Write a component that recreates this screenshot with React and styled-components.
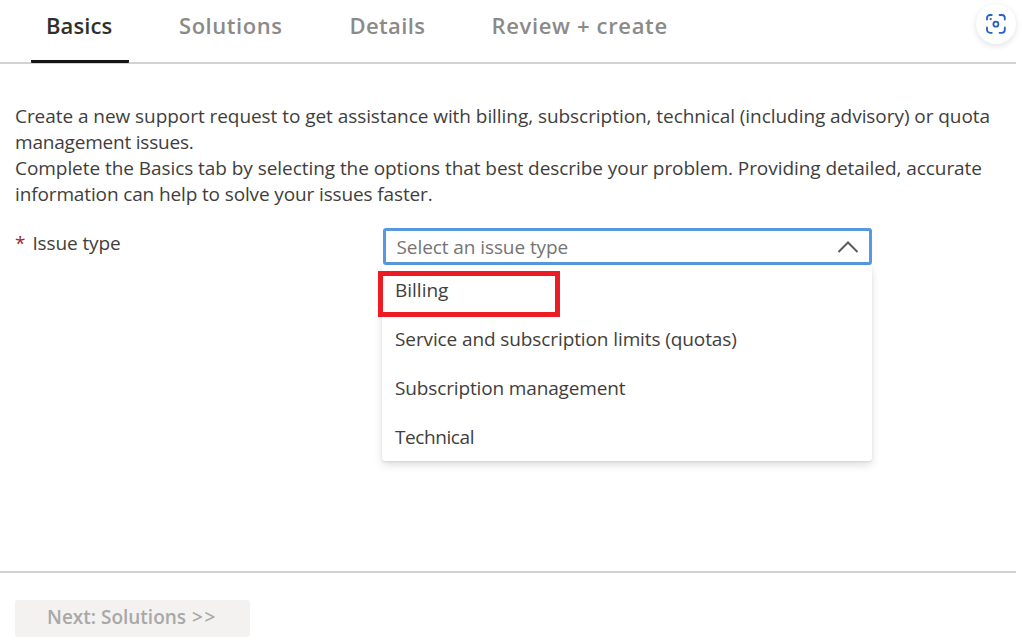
import React from "react";
import styled, { createGlobalStyle } from "styled-components";

const GlobalStyle = createGlobalStyle`
  *, *::before, *::after { box-sizing: border-box; }
  body {
    margin: 0;
    background: #fff;
    color: #3f3e3d;
    font: 400 19px/26px "Open Sans", "Noto Sans", sans-serif;
    overflow: hidden;
  }
`;

const Page = styled.main`
  position: relative;
  display: flex;
  flex-direction: column;
  width: 1016px;
  height: 643px;
`;

const TabBar = styled.nav`
  display: flex;
  align-items: flex-start;
  height: 64px;
  padding-left: 31px;
  border-bottom: 2px solid #d2d2d2;
`;

const Tab = styled.a`
  display: block;
  flex: none;
  width: ${(p) => p.$width}px;
  height: 63px;
  margin-right: ${(p) => p.$gap || 0}px;
  padding: 10px 0 0 15px;
  border-bottom: 3px solid ${(p) => (p.$active ? "#161514" : "transparent")};
  border-radius: 1px;
  color: ${(p) => (p.$active ? "#302f2e" : "#8b8a89")};
  font-size: 22px;
  font-weight: 600;
  line-height: 30px;
  letter-spacing: ${(p) => p.$track}px;
  white-space: nowrap;
`;

const Body = styled.section`
  flex: none;
  height: 507px;
  padding: 39px 16px 0 15px;
`;

const Line = styled.span`
  display: block;
  letter-spacing: ${(p) => p.$track}px;
  white-space: nowrap;
`;

const Field = styled.div`
  display: flex;
  margin-top: 23px;
`;

const Label = styled.label`
  display: flex;
  flex: none;
  width: 368px;
  gap: 7px;
  letter-spacing: -0.1px;
`;

const Required = styled.span`
  color: #a4262c;
`;

const Combo = styled.div`
  position: relative;
  width: 489px;
  height: 37px;
  margin-top: -2px;
`;

const Select = styled.div`
  display: flex;
  align-items: center;
  justify-content: space-between;
  height: 37px;
  padding: 1px 10px 0 10.5px;
  border: 3px solid #5898de;
  border-radius: 3px;
  color: #757473;
  letter-spacing: -0.08px;
`;

const List = styled.ul`
  position: absolute;
  top: 37px;
  left: -1px;
  width: 490px;
  height: 196px;
  margin: 0;
  padding: 0;
  list-style: none;
  background: #fff;
  border-radius: 0 0 3px 3px;
  box-shadow: 0 4px 9px rgba(0, 0, 0, 0.13), 0 1px 2px rgba(0, 0, 0, 0.08);
`;

const Option = styled.li`
  height: 49px;
  padding: 12px 13px 0;
  letter-spacing: ${(p) => p.$track}px;
`;

const Highlight = styled.div`
  position: absolute;
  top: 43px;
  left: -5px;
  width: 182px;
  height: 46px;
  border: 5px solid #ed1c24;
`;

const Footer = styled.footer`
  flex: 1;
  padding: 27px 0 0 15px;
  border-top: 2px solid #d2d2d2;
`;

const NextButton = styled.button`
  display: flex;
  align-items: center;
  gap: 6px;
  width: 235px;
  height: 37px;
  padding: 0 0 3px 32px;
  border: 0;
  border-radius: 3px;
  background: #f3f2f1;
  color: #a9a8a7;
  font: 600 19px/26px "Open Sans", "Noto Sans", sans-serif;
`;

const Arrows = styled.span`
  letter-spacing: 1.5px;
`;

const ScanButton = styled.div`
  position: absolute;
  top: 4px;
  left: 976px;
  display: grid;
  place-items: center;
  width: 40px;
  height: 40px;
  border-radius: 50%;
  background: #fff;
  box-shadow: 0 2px 6px rgba(0, 0, 0, 0.12);
`;

const ScanIcon = () => (
  <svg width="22" height="22" viewBox="0 0 22 22" fill="none" stroke="#2463bd" strokeWidth="1.8" strokeLinecap="round">
    <path d="M2 6.6V5a3 3 0 0 1 3-3h1.8M14.6 2h2.2a3 3 0 0 1 3 3v1.6M19.8 14.4v2.4a3 3 0 0 1-3 3h-2.2M6.8 19.8H5a3 3 0 0 1-3-3v-2.4" />
    <circle cx="10.9" cy="11.2" r="2.5" />
    <circle cx="5.7" cy="6.1" r="1.1" fill="#2463bd" stroke="none" />
  </svg>
);

const Chevron = () => (
  <svg width="22" height="14" viewBox="0 0 22 14" fill="none" stroke="#5c5b5a" strokeWidth="2">
    <path d="M1.5 12L11 2.5L20.5 12" />
  </svg>
);

const tabs = [
  { label: "Basics", width: 98, gap: 35, track: 0.1, active: true },
  { label: "Solutions", width: 170.5, track: 0.55 },
  { label: "Details", width: 142, track: 0.35 },
  { label: "Review + create", width: 205, track: 0.65 },
];

const options = [
  { label: "Billing", track: 0 },
  { label: "Service and subscription limits (quotas)", track: -0.105 },
  { label: "Subscription management", track: -0.14 },
  { label: "Technical", track: -0.42 },
];

export default function App() {
  return (
    <>
      <GlobalStyle />
      <Page>
        <TabBar>
          {tabs.map((t) => (
            <Tab key={t.label} $width={t.width} $gap={t.gap} $track={t.track} $active={t.active}>
              {t.label}
            </Tab>
          ))}
        </TabBar>
        <Body>
          <Line $track={-0.056}>
            Create a new support request to get assistance with billing, subscription, technical (including advisory) or quota
          </Line>
          <Line $track={-0.2}>management issues.</Line>
          <Line $track={-0.057}>
            Complete the Basics tab by selecting the options that best describe your problem. Providing detailed, accurate
          </Line>
          <Line $track={-0.13}>information can help to solve your issues faster.</Line>
          <Field>
            <Label>
              <Required>*</Required>
              Issue type
            </Label>
            <Combo>
              <Select>
                Select an issue type
                <Chevron />
              </Select>
              <List>
                {options.map((o) => (
                  <Option key={o.label} $track={o.track}>{o.label}</Option>
                ))}
              </List>
              <Highlight />
            </Combo>
          </Field>
        </Body>
        <Footer>
          <NextButton disabled>
            <span>Next: Solutions</span>
            <Arrows>&gt;&gt;</Arrows>
          </NextButton>
        </Footer>
        <ScanButton>
          <ScanIcon />
        </ScanButton>
      </Page>
    </>
  );
}
